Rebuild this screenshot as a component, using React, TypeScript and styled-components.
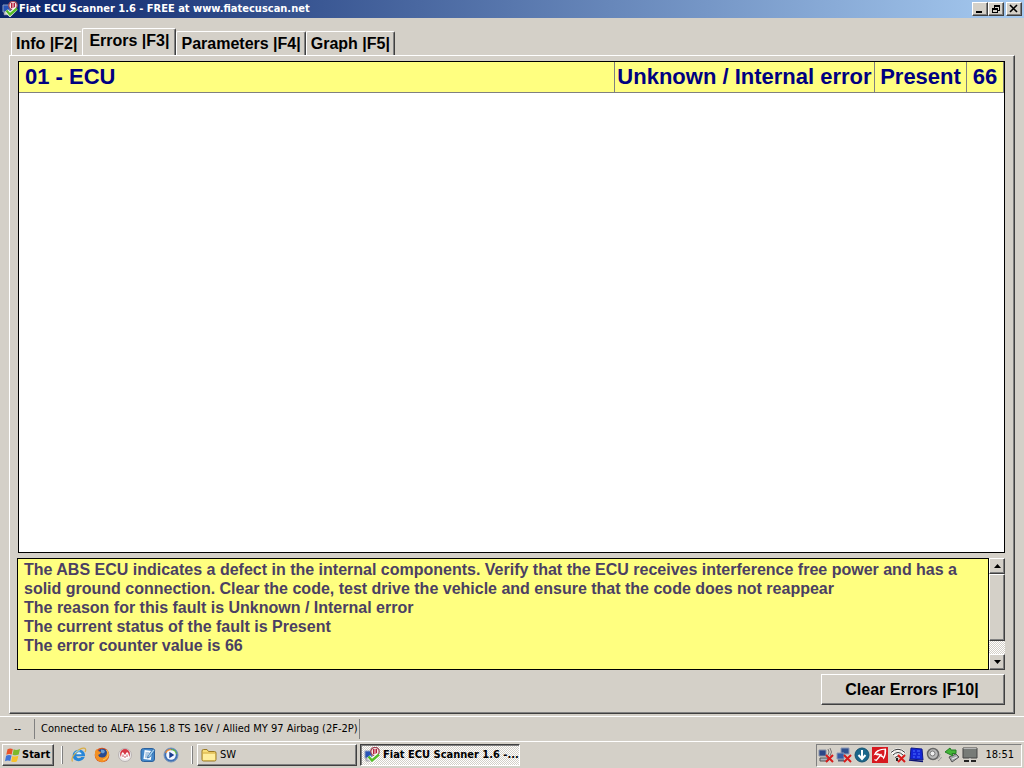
import React from "react";
import styled, { createGlobalStyle, css } from "styled-components";

const face = "#d4d0c8";
const shadow = "#808080";
const dark = "#404040";
const yellow = "#ffff80";
const uiFont = `"DejaVu Sans Condensed", "DejaVu Sans", sans-serif`;
const appFont = `"Liberation Sans", Arial, sans-serif`;

const GlobalStyle = createGlobalStyle`
  * { box-sizing: border-box; }
  body { margin: 0; background: ${face}; color: #000; }
  button { font: inherit; color: inherit; margin: 0; border-radius: 0; }
  svg { display: block; flex: none; }
`;

const raised = css`
  border: 1px solid;
  border-color: #fff ${dark} ${dark} #fff;
  box-shadow: inset -1px -1px 0 ${shadow};
  background: ${face};
`;

const Desktop = styled.div`
  display: flex;
  flex-direction: column;
  min-height: 100vh;
  font: 11px/14px ${uiFont};
`;

const TitleBar = styled.header`
  display: flex;
  align-items: center;
  height: 18px;
  padding: 0 2px;
  background: linear-gradient(90deg, #0a246a, #a6caf0);
  color: #fff;
`;

const Title = styled.h1`
  flex: 1;
  margin: 0;
  padding-left: 1px;
  font: bold 11px/16px ${uiFont};
  white-space: nowrap;
`;

const CaptionButton = styled.button<{ $gap?: boolean }>`
  ${raised}
  display: flex;
  align-items: center;
  justify-content: center;
  width: 16px;
  height: 14px;
  padding: 0;
  margin-left: ${(p) => (p.$gap ? 2 : 0)}px;
`;

const Main = styled.main`
  flex: 1;
  display: flex;
  flex-direction: column;
  padding: 10px 9px 2px;
  font: bold 16px/19px ${appFont};
`;

const Tabs = styled.div`
  display: flex;
  align-items: flex-end;
  padding-left: 2px;
`;

const Tab = styled.button<{ $active?: boolean }>`
  height: ${(p) => (p.$active ? 28 : 24)}px;
  padding: ${(p) => (p.$active ? "0 6px 4px" : "0 4px")};
  margin-bottom: ${(p) => (p.$active ? -1 : 0)}px;
  border: 1px solid;
  border-color: #fff ${dark} transparent #fff;
  border-bottom: 0;
  border-radius: 2px 2px 0 0;
  background: ${face};
  box-shadow: inset -1px 0 0 ${shadow};
  white-space: nowrap;
  &:first-child {
    border-right-color: ${face};
    box-shadow: none;
  }
`;

const Panel = styled.section`
  flex: 1;
  display: flex;
  flex-direction: column;
  padding: 5px 9px 8px 8px;
  border: 1px solid;
  border-color: #fff ${dark} ${dark} #fff;
  box-shadow: inset -1px -1px 0 ${shadow};
`;

const ErrorList = styled.div`
  flex: 1;
  border: 1px solid #000;
  background: #fff;
`;

const ErrorTable = styled.table`
  width: 100%;
  table-layout: fixed;
  border-spacing: 0;
  font: bold 22px/30px ${appFont};
  color: #000080;
`;

const Cell = styled.td<{ $width?: number }>`
  width: ${(p) => (p.$width ? `${p.$width}px` : "auto")};
  padding: ${(p) => (p.$width ? "0" : "0 6px")};
  border-right: 1px solid ${shadow};
  border-bottom: 1px solid ${shadow};
  background: ${yellow};
  text-align: ${(p) => (p.$width ? "center" : "left")};
  white-space: nowrap;
`;

const Details = styled.div`
  display: flex;
  height: 112px;
  margin: 5px 0 4px -1px;
`;

const DetailText = styled.div`
  flex: 1;
  padding: 1px 6px;
  border: 1px solid #000;
  background: ${yellow};
  color: #4b3f63;
  p { margin: 0; }
`;

const ScrollBar = styled.div`
  display: flex;
  flex-direction: column;
  width: 16px;
  background: repeating-conic-gradient(#fff 0 25%, ${face} 0 50%) 0 0 / 2px 2px;
`;

const ScrollButton = styled.button`
  ${raised}
  display: flex;
  align-items: center;
  justify-content: center;
  height: 16px;
  padding: 0;
`;

const Thumb = styled.div`
  ${raised}
  height: 67px;
  margin-bottom: auto;
`;

const ClearButton = styled.button`
  ${raised}
  align-self: flex-end;
  width: 184px;
  height: 31px;
  padding: 0 2px 0 0;
`;

const StatusBar = styled.footer`
  display: flex;
  align-items: center;
  height: 25px;
  border-top: 1px solid #fff;
`;

const StatusPane = styled.span`
  display: flex;
  align-items: center;
  height: 20px;
  padding: 0 1px 0 6px;
  border-right: 1px solid ${shadow};
  white-space: nowrap;
  &:first-child { width: 35px; padding-left: 14px; }
`;

const TaskBar = styled.nav`
  display: flex;
  align-items: center;
  height: 27px;
  padding: 0 2px;
  border-top: 1px solid #fff;
`;

const StartButton = styled.button`
  ${raised}
  display: flex;
  align-items: center;
  gap: 1px;
  width: 52px;
  height: 22px;
  padding: 0 2px;
  font: bold 11px/14px ${uiFont};
`;

const Grip = styled.span`
  width: 2px;
  height: 18px;
  margin: 0 4px 0 7px;
  border-left: 1px solid #fff;
  border-right: 1px solid ${shadow};
`;

const QuickLaunch = styled.div`
  display: flex;
  width: 117px;
`;

const IconButton = styled.button`
  display: flex;
  justify-content: center;
  width: 23px;
  padding: 0;
  border: 0;
  background: none;
`;

const TaskButton = styled.button<{ $active?: boolean }>`
  ${raised}
  display: flex;
  align-items: center;
  gap: 3px;
  width: 160px;
  height: 22px;
  margin-right: 3px;
  padding: 0 3px;
  text-align: left;
  white-space: nowrap;
  ${(p) =>
    p.$active &&
    css`
      border-color: ${dark} #fff #fff ${dark};
      box-shadow: inset 1px 1px 0 ${shadow};
      background: repeating-conic-gradient(#fff 0 25%, ${face} 0 50%) 0 0 / 2px 2px;
      font-weight: bold;
    `}
`;

const Tray = styled.div`
  display: flex;
  align-items: center;
  gap: 2px;
  height: 23px;
  margin-left: auto;
  padding: 0 7px 0 1px;
  border: 1px solid;
  border-color: ${shadow} #fff #fff ${shadow};
  time { padding-left: 5px; }
`;

const Svg = ({ children }: { children: React.ReactNode }) => (
  <svg width="16" height="16" viewBox="0 0 16 16" aria-hidden="true">
    {children}
  </svg>
);

const ScannerIcon = () => (
  <Svg>
    <path d="M1 4h7v7H1z" fill="#2855b8" stroke="#8b9cbc" />
    <path d="M2 11h6v3H2z" fill="#c9cbd2" stroke="#778" strokeWidth=".6" />
    <circle cx="11" cy="4.5" r="4.2" fill="#f5e4e4" stroke="#9c4856" strokeWidth="1.3" />
    <path d="M9.500 2v5M12.500 2v5M11 2v5" stroke="#b3203c" strokeWidth="1" />
    <path d="M4.500 9.500l3.500 4 6-6" fill="none" stroke="#fff" strokeWidth="4" />
    <path d="M4.500 9.500l3.500 4 7-6" fill="none" stroke="#55bd28" strokeWidth="2.400" />
  </Svg>
);

const WindowsLogo = () => (
  <Svg>
    <path d="M2.500 2.200Q5 .8 7.800 2L6.700 7.500Q4 6.500 1.300 7.800z" fill="#e8532a" />
    <path d="M8.700 2.300Q11 3.600 15 2L13.700 7.600Q10.600 9 7.600 7.800z" fill="#7cb92c" />
    <path d="M1.100 8.800Q3.800 7.500 6.500 8.600L5.300 14Q2.600 13 0 14.300z" fill="#3f74d8" />
    <path d="M7.400 8.900Q10.200 10 13.400 8.700L12 14.200Q9 15.800 6.200 14.400z" fill="#f7c12b" />
  </Svg>
);

const ExplorerIcon = () => (
  <Svg>
    <path d="M14 9.300H5.300c.4 2.300 3.800 2.600 4.900.8h3.500C11.500 16.300 1.700 15 1.700 8.800 1.700 1 14.700.6 14 9.300z" fill="#2686d8" />
    <path d="M5.300 7.200h5.300C10.200 4.600 5.900 4.600 5.300 7.200z" fill="#e6f3fb" />
    <path d="M1.500 14.500C-1 10 8 1 13 1.200c2.200.2 2 2.300 1 3.800" fill="none" stroke="#d9ad45" strokeWidth="1.200" />
    <path d="M3.600 6Q6 3.600 9 3.800" fill="none" stroke="#8ed3fa" />
  </Svg>
);

const FirefoxIcon = () => (
  <Svg>
    <circle cx="8" cy="8" r="7.300" fill="#d9531c" />
    <circle cx="8.500" cy="6.500" r="4.800" fill="#294c91" />
    <path d="M7 2.500l3 .5 1 2-2 1.500-2-1z" fill="#6aa0d5" />
    <path d="M1 4l2-2 1 2 3 1-1 2-2 1q1 3 5 2.500 4-.5 4-6l1.700 3q0 6-6 7.500Q3 15 1 9z" fill="#f29125" />
    <path d="M12.500 3q2.500 3 1.500 6t-5 4" fill="none" stroke="#ffd052" />
  </Svg>
);

const RedOrbIcon = () => (
  <Svg>
    <circle cx="8" cy="8" r="6.500" fill="#eceaea" stroke="#b8b2b2" />
    <circle cx="8" cy="7" r="4.900" fill="#d63845" />
    <path d="M4 10.500Q4.500 4 6.300 5.500L8 8l1.500-2.500q2-1 2.800 5Q8 14 4 10.500z" fill="#fff" />
    <path d="M6 7.500v2.500M8 9v2M10 7.500v2.500" fill="none" stroke="#c45864" />
  </Svg>
);

const DesktopIcon = () => (
  <Svg>
    <rect x="1" y="1.500" width="13.500" height="13" rx="2.500" fill="#4388ca" stroke="#2b609c" />
    <rect x="4" y="3.500" width="7.500" height="9" fill="#f6fbff" transform="rotate(8 8 8)" />
    <path d="M5.500 6h4M5.200 8h3M5 10h4" stroke="#6b9bc9" />
    <path d="M8 9l5-7 2 1-5 7-2.500 1z" fill="#9ed0f2" stroke="#235b9b" strokeWidth=".7" />
  </Svg>
);

const PlayerIcon = () => (
  <Svg>
    <circle cx="8" cy="8" r="7" fill="#3e70b5" stroke="#7895bb" />
    <path d="M2 6a6 6 0 0 1 6-4v3z" fill="#ef8b32" />
    <path d="M8 2a6 6 0 0 1 6 5l-3 1z" fill="#66b84a" />
    <circle cx="8" cy="8" r="4.800" fill="#f4f8ff" />
    <path d="M6.300 4.800l5 3.200-5 3.200z" fill="#183d8f" />
  </Svg>
);

const FolderIcon = () => (
  <Svg>
    <path d="M1 12.500V4q0-1.500 1.500-1.500H6l1.500 2h6q1.500 0 1.500 1.500v6.500q0 1.500-1.500 1.500h-11Q1 14 1 12.500z" fill="#f7dd78" stroke="#9c7a24" />
    <path d="M2 7.500q0-1 1-1h11v5.500q0 1-1 1H3q-1 0-1-1z" fill="#ffee9e" />
    <path d="M2 6h12" stroke="#d6ad45" />
  </Svg>
);

const RedCross = () => <path d="M8 8l7 7M15 8l-7 7" stroke="#d91b1b" strokeWidth="2" />;

const WirelessPcIcon = () => (
  <Svg>
    <path d="M1 3h7v6H1z" fill="#2c4788" stroke="#8791a5" />
    <path d="M2 11h8v3H2z" fill="#aeb4c0" stroke="#555" />
    <path d="M10 2q2 3 0 6M12 1q3 4 0 8" fill="none" stroke="#777" />
    <RedCross />
  </Svg>
);

const NetworkIcon = () => (
  <Svg>
    <path d="M5 1h8v6H5z" fill="#31518f" stroke="#8e9ab6" />
    <path d="M1 6h7v6H1z" fill="#355ca5" stroke="#8e9ab6" />
    <path d="M2 13.500h6" stroke="#596179" strokeWidth="2" />
    <RedCross />
  </Svg>
);

const DownloadIcon = () => (
  <Svg>
    <circle cx="8" cy="8" r="7" fill="#1b668a" stroke="#14516e" />
    <path d="M8 3v8M4.500 8L8 12l3.500-4" fill="none" stroke="#fff" strokeWidth="2" />
  </Svg>
);

const AntivirusIcon = () => (
  <Svg>
    <path d="M0 0h16v16H0z" fill="#d71920" />
    <path d="M1.500 8.500Q3 1.500 14 1.500q1 6-2.500 11-.3-2.500-2.500-2.800Q7.300 7.500 5 8.500 3.500 7 1.500 8.500z" fill="#fff" />
    <path d="M4 6.500Q7 3 12.500 2.800q.3 4-1 7Q10.500 8 9 8 7 5.500 4 6.500z" fill="#d71920" />
    <path d="M9.500 7l-5.300 6.500-1.700-1" fill="none" stroke="#fff" strokeWidth="1.300" />
  </Svg>
);

const WifiIcon = () => (
  <Svg>
    <path d="M1 6Q8-1 15 6M3 8q5-5 10 0M5 10q3-3 6 0" fill="none" stroke="#fff" strokeWidth="2.500" />
    <path d="M1 5.500Q8-1 15 5.500M3 8q5-5 10 0M5 10.500q3-3 6 0" fill="none" stroke="#333" strokeWidth="1" />
    <path d="M6 11h2v3H6z" fill="#222" />
    <RedCross />
  </Svg>
);

const BlueScreenIcon = () => (
  <Svg>
    <path d="M3 1l11 1 1 11-13-1z" fill="#1425d7" stroke="#101a85" />
    <path d="M5 4h2M9 4h3M5 7h3M10 7h2M5 10h2M9 10h3" stroke="#4b73ff" />
    <path d="M1 13l14 1.500" stroke="#0b1374" strokeWidth="1.500" />
  </Svg>
);

const SpeakerIcon = () => (
  <Svg>
    <circle cx="7" cy="7" r="5.500" fill="#b9b9b9" stroke="#666" strokeWidth="1.500" />
    <circle cx="6.500" cy="6.500" r="2.500" fill="#eee" stroke="#777" />
    <path d="M11 12q3-1 3-5M12 14q3-2 3.500-4" stroke="#999" fill="none" />
  </Svg>
);

const EjectIcon = () => (
  <Svg>
    <path d="M5 10l7-3 3 3-7 5z" fill="#a4a7ab" stroke="#555" />
    <path d="M8 12l5-2" stroke="#eee" />
    <path d="M1 5l5-4 1 2h5v3.500H8L9 9z" fill="#43b536" stroke="#257f25" />
  </Svg>
);

const MonitorsIcon = () => (
  <Svg>
    <path d="M1 1h14v10H1z" fill="#777b77" stroke="#444" />
    <path d="M1.500 1.500h13" stroke="#b6b6b6" />
    <path d="M2 14h5M9 14h5" stroke="#222" strokeWidth="2" />
    <path d="M8 11v5" stroke="#ddd" />
  </Svg>
);

const quick = [
  ["Internet Explorer", ExplorerIcon],
  ["Firefox", FirefoxIcon],
  ["Browser", RedOrbIcon],
  ["Show Desktop", DesktopIcon],
  ["Media Player", PlayerIcon],
] as const;

const tabs = ["Info |F2|", "Errors |F3|", "Parameters |F4|", "Graph |F5|"];

const messages = [
  "The ABS ECU indicates a defect in the internal components. Verify that the ECU receives interference free power and has a solid ground connection. Clear the code, test drive the vehicle and ensure that the code does not reappear",
  "The reason for this fault is Unknown / Internal error",
  "The current status of the fault is Present",
  "The error counter value is 66",
];

const Arrow = ({ down }: { down?: boolean }) => (
  <svg width="7" height="4" viewBox="0 0 7 4" aria-hidden="true">
    <path d={down ? "M0 0h7L3.500 4z" : "M0 4h7L3.500 0z"} />
  </svg>
);

export default function App() {
  return (
    <Desktop>
      <GlobalStyle />
      <TitleBar>
        <ScannerIcon />
        <Title>Fiat ECU Scanner 1.6 - FREE at www.fiatecuscan.net</Title>
        <CaptionButton aria-label="Minimize">
          <svg width="10" height="10"><path d="M1 7h6v2H1z" /></svg>
        </CaptionButton>
        <CaptionButton aria-label="Restore">
          <svg width="10" height="10" shapeRendering="crispEdges">
            <path d="M3 1h6v2H3zM3 3h1v1H3zM8 3h1v4H8zM7 6h1v1H7zM1 4h6v2H1zM1 6h1v3H1zM6 6h1v3H6zM1 8h6v1H1z" />
          </svg>
        </CaptionButton>
        <CaptionButton $gap aria-label="Close">
          <svg width="10" height="10"><path d="M1 1l7 7M8 1l-7 7" stroke="#000" strokeWidth="1.600" /></svg>
        </CaptionButton>
      </TitleBar>

      <Main>
        <Tabs role="tablist">
          {tabs.map((t, i) => (
            <Tab key={t} role="tab" aria-selected={i === 1} $active={i === 1}>{t}</Tab>
          ))}
        </Tabs>
        <Panel role="tabpanel">
          <ErrorList>
            <ErrorTable>
              <tbody>
                <tr>
                  <Cell>01 - ECU</Cell>
                  <Cell $width={260}>Unknown / Internal error</Cell>
                  <Cell $width={92}>Present</Cell>
                  <Cell $width={37}>66</Cell>
                </tr>
              </tbody>
            </ErrorTable>
          </ErrorList>
          <Details>
            <DetailText>
              {messages.map((m) => <p key={m}>{m}</p>)}
            </DetailText>
            <ScrollBar>
              <ScrollButton aria-label="Scroll up"><Arrow /></ScrollButton>
              <Thumb />
              <ScrollButton aria-label="Scroll down"><Arrow down /></ScrollButton>
            </ScrollBar>
          </Details>
          <ClearButton>Clear Errors |F10|</ClearButton>
        </Panel>
      </Main>

      <StatusBar>
        <StatusPane>--</StatusPane>
        <StatusPane>Connected to ALFA 156 1.8 TS 16V / Allied MY 97 Airbag (2F-2P)</StatusPane>
      </StatusBar>

      <TaskBar>
        <StartButton><WindowsLogo />Start</StartButton>
        <Grip />
        <QuickLaunch>
          {quick.map(([name, Icon]) => (
            <IconButton key={name} aria-label={name}><Icon /></IconButton>
          ))}
        </QuickLaunch>
        <Grip />
        <TaskButton><FolderIcon />SW</TaskButton>
        <TaskButton $active><ScannerIcon />Fiat ECU Scanner 1.6 -...</TaskButton>
        <Tray>
          <WirelessPcIcon />
          <NetworkIcon />
          <DownloadIcon />
          <AntivirusIcon />
          <WifiIcon />
          <BlueScreenIcon />
          <SpeakerIcon />
          <EjectIcon />
          <MonitorsIcon />
          <time>18:51</time>
        </Tray>
      </TaskBar>
    </Desktop>
  );
}
